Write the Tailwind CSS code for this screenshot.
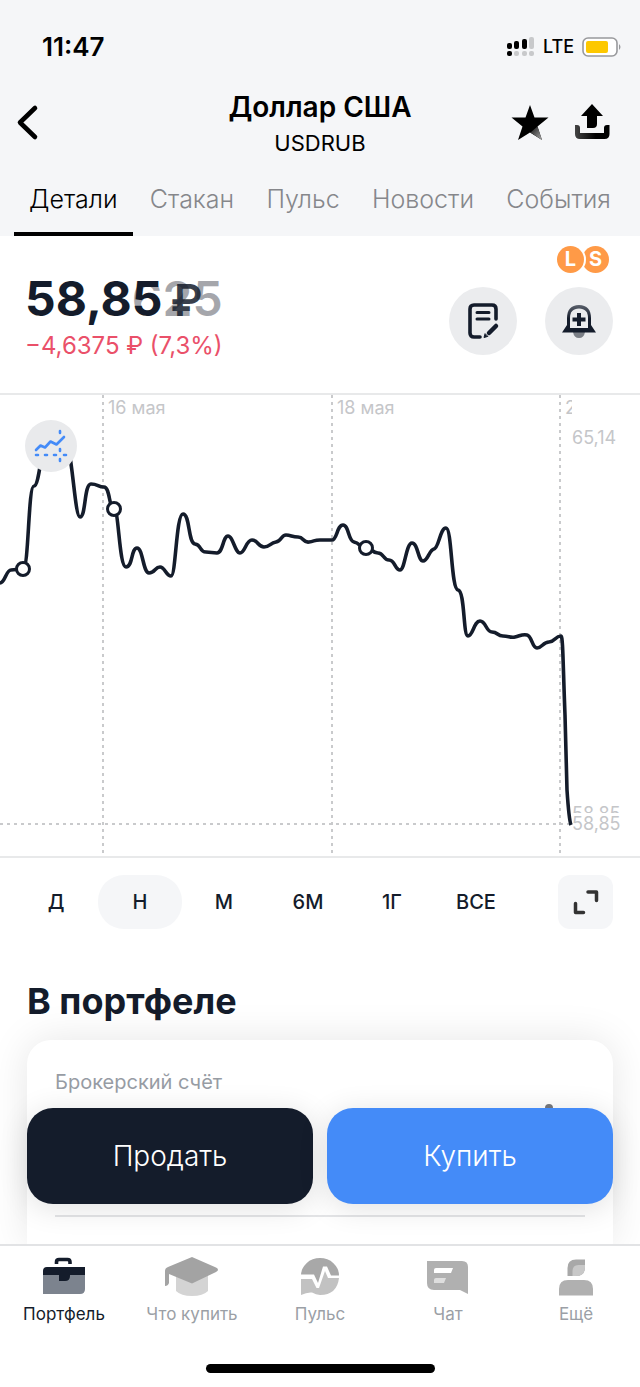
<!DOCTYPE html>
<html lang="ru">

<head>
  <meta charset="UTF-8" />
  <meta name="viewport" content="width=device-width, initial-scale=1.0" />
  <script src="https://cdn.jsdelivr.net/npm/@tailwindcss/browser@4"></script>
  <title>Доллар США</title>
</head>

<body class="min-h-screen flex flex-col bg-white text-[#141c2b] font-['Inter','Liberation_Sans',sans-serif]">
  <header class="bg-[#f5f6f8] text-black">
    <!-- Status bar -->
    <div class="flex items-center justify-between pt-8 pl-[42px] pr-[18px]">
      <span class="text-[26px] leading-[30px] font-semibold">11:47</span>
      <div class="flex items-center gap-2">
        <svg class="w-7 h-5" viewBox="0 0 28 20" aria-hidden="true">
          <g fill="#000">
            <rect x="0" y="6" width="5" height="6" rx="2" />
            <rect x="7" y="4" width="5" height="8" rx="2" />
            <rect x="15" y="2" width="5" height="10" rx="2" />
            <rect x="0" y="14" width="5" height="5" rx="2" />
          </g>
          <g fill="#c8c9cb">
            <rect x="22" y="0" width="5" height="12" rx="2" />
            <rect x="7" y="14" width="5" height="5" rx="2" />
            <rect x="15" y="14" width="5" height="5" rx="2" />
            <rect x="22" y="14" width="5" height="5" rx="2" />
          </g>
        </svg>
        <span class="text-lg font-medium">LTE</span>
        <svg class="w-10 h-5" viewBox="0 0 40 20" aria-hidden="true">
          <rect x="1" y="1" width="34" height="18" rx="5" fill="#fff" stroke="#98999c" stroke-width="1.6" />
          <rect x="4" y="4" width="22" height="12" rx="2" fill="#fdc800" />
          <path d="M37 7q3 3 0 6z" fill="#98999c" />
        </svg>
      </div>
    </div>

    <!-- Title row -->
    <div class="grid grid-cols-[1fr_auto_1fr] items-center mt-[27px] px-3.5">
      <button type="button" aria-label="Назад" class="justify-self-start">
        <svg class="w-7 h-10" viewBox="0 0 28 40" fill="none" stroke="#000" stroke-width="4.6" stroke-linecap="round" stroke-linejoin="round">
          <path d="M21 5 6 19.500 21 34" />
        </svg>
      </button>
      <div class="text-center">
        <h1 class="text-[28px] leading-9 font-semibold">Доллар США</h1>
        <p class="mt-1 text-[22px] leading-7">USDRUB</p>
      </div>
      <div class="justify-self-end flex gap-6 pr-4">
        <button type="button" aria-label="В избранное">
          <svg class="w-10 h-10" viewBox="0 0 40 40">
            <defs>
              <linearGradient id="star-leg" x1="0" y1="0" x2="1" y2="1">
                <stop offset="0.2" stop-color="#333" />
                <stop offset="1" stop-color="#aaa" />
              </linearGradient>
            </defs>
            <path d="M20 2 24.500 14.500H38.500L27.500 23.500 32 37 20 29.500 8 37 12.500 23.500 1.500 14.500H15.500Z" />
            <path d="M27.500 23.500 32 37 20.500 29.500Z" fill="url(#star-leg)" />
          </svg>
        </button>
        <button type="button" aria-label="Поделиться">
          <svg class="w-9 h-10" viewBox="0 0 36 40">
            <defs>
              <linearGradient id="tray">
                <stop offset="0" stop-color="#444" />
                <stop offset="0.6" stop-color="#000" />
              </linearGradient>
            </defs>
            <path d="M18 1 29 13H23V21Q23 25 19 25H13V13H7Z" />
            <path d="M1 22H3Q6 22 6 25V30H30V25Q30 22 33 22H35.500V31Q35.500 36 30.500 36H6Q1 36 1 31Z" fill="url(#tray)" />
          </svg>
        </button>
      </div>
    </div>

    <!-- Tabs -->
    <nav class="flex justify-between mt-[25px] px-3.5 text-[25px] leading-[34px] font-light text-[#86878b]">
      <a href="#details" class="px-[15px] pb-4 border-b-4 border-black text-black">Детали</a>
      <a href="#book" class="px-[15px] pb-4">Стакан</a>
      <a href="#pulse" class="px-[15px] pb-4">Пульс</a>
      <a href="#news" class="px-[15px] pb-4">Новости</a>
      <a href="#events" class="px-[15px] pb-4">События</a>
    </nav>
  </header>

  <main class="flex-1 flex flex-col">
    <!-- Price -->
    <section class="flex justify-between px-[25px] pb-[31px]">
      <div class="pt-[35px]">
        <!-- the old and the new price overlap while the number is changing -->
        <div class="flex text-5xl leading-[56px] font-bold">
          <span>58,8</span>
          <span class="grid">
            <span class="col-start-1 row-start-1 font-semibold text-[#a5a6ab]">625</span>
            <span class="col-start-1 row-start-1">5<span class="ml-2 text-[44px] font-semibold text-[#141c2b]/85">₽</span></span>
          </span>
        </div>
        <p class="mt-0.5 text-2xl leading-8 text-[#ea5069]">−4,6375 ₽ (7,3%)</p>
      </div>
      <div class="flex flex-col items-end pt-2.5 pr-0.5">
        <div class="flex pr-1 text-white text-xl leading-[27px] font-bold text-center">
          <span class="relative z-10 size-[27px] rounded-full bg-[#ff9a47] ring-2 ring-white">L</span>
          <span class="-ml-0.5 size-[27px] rounded-full bg-[#ff9a47]">S</span>
        </div>
        <div class="flex gap-7 mt-3.5">
          <button type="button" aria-label="Заметка" class="flex items-center justify-center size-[68px] rounded-full bg-[#ebecee]">
            <svg class="size-10" viewBox="0 0 40 40" fill="none" stroke="#141c2b" stroke-width="3.600" stroke-linecap="round" stroke-linejoin="round">
              <path d="M17 36H11Q7 36 7 32V8Q7 4 11 4H29Q33 4 33 8V18" />
              <path d="M14 11.500H26M14 18H26" stroke-width="3" />
              <path d="M26 32 33 25" stroke-width="4.500" />
              <path d="M22 33 21 36.500 24.500 35.500Z" stroke-width="1" fill="#141c2b" />
            </svg>
          </button>
          <button type="button" aria-label="Уведомление о цене" class="flex items-center justify-center size-[68px] rounded-full bg-[#ebecee]">
            <svg class="size-10" viewBox="0 0 40 40">
              <defs>
                <linearGradient id="bell" x2="0" y2="1">
                  <stop offset="0" stop-color="#5b616c" />
                  <stop offset="0.5" stop-color="#141c2b" />
                </linearGradient>
              </defs>
              <path d="M14 31H26Q25 37 20 37T14 31Z" fill="#7b7f86" />
              <path d="M3 31.500 8 24V17C8 9 12 4 20 4S32 9 32 17V24L37 31.500Z" fill="url(#bell)" />
              <path d="M11 27V17C11 11 14 7.500 20 7.500S29 11 29 17V27Z" fill="#ebecee" />
              <path d="M20 12V25M13.500 18.500H26.500" stroke="#141c2b" stroke-width="4" />
            </svg>
          </button>
        </div>
      </div>
    </section>

    <!-- Chart -->
    <section class="relative border-y-2 border-[#e8e9ea]">
      <svg class="block w-full" viewBox="0 0 640 461" font-size="18" fill="#c5c6c9">
        <defs>
          <clipPath id="date-clip">
            <rect x="560" y="0" width="12" height="30" />
          </clipPath>
          <clipPath id="quote-clip">
            <rect x="570" y="400" width="70" height="18" />
          </clipPath>
        </defs>
        <path d="M103 0V461M332 0V461M560 0V461M0 429H571" fill="none" stroke="#c9cacc" stroke-width="2" stroke-dasharray="3 4" />
        <text x="108" y="19">16 мая</text>
        <text x="337" y="19">18 мая</text>
        <text x="565" y="19" clip-path="url(#date-clip)">20 мая</text>
        <text x="572" y="49">65,14</text>
        <text x="572" y="425" clip-path="url(#quote-clip)">58,85</text>
        <text x="572" y="435">58,85</text>
        <path d="M0 188C5 188 6 175 11 175S17 174 23 174S28 91 34 91S42 38 50 38L62 38C72 38 74 122 80 122S84 89 91 89S98 92 104 92S109 114 114 114S119 172 126 172S131 153 137 153S143 178 149 178S155 172 160 172S166 181 171 181S176 119 183 119S188 148 195 149S199 157 206 157L217 158C223 158 223 141 228 141S235 158 240 158S246 145 252 145S258 152 264 152S270 148 276 147S281 140 286 140S292 142 298 142S303 148 309 147S314 145 320 145L332 145C337 145 337 130 343 130S348 146 354 147S360 153 366 153S372 158 378 158S383 165 389 165S395 175 400 175S406 148 412 148S418 166 423 166S429 155 434 154S440 133 446 133S451 194 458 195S463 241 468 241S474 226 480 226S486 237 492 237S497 241 503 241S510 243 515 242S522 239 527 240S532 253 537 253S543 247 549 247S555 241 561 241C563 241 563 270 565 320L567 395Q569 425 571 430" fill="none" stroke="#141c2b" stroke-width="3.600" stroke-linejoin="round" />
        <g fill="#fff" stroke="#141c2b" stroke-width="3">
          <circle cx="23" cy="174" r="6.500" />
          <circle cx="114" cy="114" r="6.500" />
          <circle cx="366" cy="153" r="6.500" />
        </g>
      </svg>
      <button type="button" aria-label="Индикаторы" class="absolute top-[25px] left-[25px] flex items-center justify-center size-[52px] rounded-full bg-[#e9eaec]">
        <svg class="size-9" viewBox="0 0 36 36" fill="none" stroke="#448bf8" stroke-width="2.600" stroke-linecap="round" stroke-linejoin="round">
          <path d="M3 22 7.500 17.500 12 19.500 17.500 13.500 23.500 16.500 31 9" />
          <path d="M3 27H5M12 27H14M21 27H23M31 27H33M27 3V5M27 21V23M27 31V33" />
        </svg>
      </button>
    </section>

    <!-- Period switch -->
    <section class="flex items-center pt-[17px] pl-3.5 pr-[27px] text-xl font-medium">
      <div class="flex-1 grid grid-cols-6 mr-10">
        <button type="button" class="h-[54px] rounded-full">Д</button>
        <button type="button" class="h-[54px] rounded-[26px] bg-[#f5f6f8]">Н</button>
        <button type="button" class="h-[54px] rounded-full">М</button>
        <button type="button" class="h-[54px] rounded-full">6М</button>
        <button type="button" class="h-[54px] rounded-full">1Г</button>
        <button type="button" class="h-[54px] rounded-full">ВСЕ</button>
      </div>
      <button type="button" aria-label="На весь экран" class="flex items-center justify-center w-[55px] h-[54px] rounded-xl bg-[#f5f6f8]">
        <svg class="size-7" viewBox="0 0 28 28" fill="none" stroke="#333" stroke-width="3.500" stroke-linecap="round" stroke-linejoin="round">
          <path d="M16 4H24.500V12.500M3.500 15.500V24.500H11.500" />
        </svg>
      </button>
    </section>

    <!-- Portfolio -->
    <section class="relative flex-1 flex flex-col pt-[50px] px-[27px] overflow-hidden">
      <h2 class="text-4xl leading-[44px] font-bold">В портфеле</h2>
      <div class="relative flex-1 mt-[17px] pt-7 px-7 pb-6 rounded-t-3xl bg-white shadow-[0_0_40px_rgba(0,0,0,0.1)]">
        <p class="text-xl leading-7 text-[#979ca4]">Брокерский счёт</p>
        <div class="mt-[119px] border-t-2 border-[#e4e5e7]"></div>
        <!-- top edge of the amount that the buttons cover -->
        <span class="absolute top-16 right-[60px] w-2 h-3 rounded-full bg-[#77797e]"></span>
      </div>
      <div class="absolute inset-x-[27px] bottom-10 grid grid-cols-2 gap-3.5 text-[28px] font-light text-white">
        <button type="button" class="h-24 rounded-[26px] bg-[#141c2b] shadow-[0_4px_30px_rgba(0,0,0,0.12)]">Продать</button>
        <button type="button" class="h-24 rounded-[26px] bg-[#448bf8] shadow-[0_4px_30px_rgba(0,0,0,0.12)]">Купить</button>
      </div>
    </section>
  </main>

  <footer class="border-t-2 border-[#e2e3e5] bg-white">
    <nav class="grid grid-cols-5 pt-2.5 text-[17px] leading-6 text-[#9b9fa6]">
      <a href="#portfolio" class="flex flex-col items-center gap-1.5 text-[#141c2b]">
        <svg class="w-14 h-10" viewBox="0 0 56 40">
          <path d="M20.500 8V6Q20.500 3.500 23 3.500H31.500Q34 3.500 34 6V8" fill="none" stroke="#141c2b" stroke-width="3.600" />
          <path d="M7 19H49V33Q49 38 44 38H7Z" fill="#7c838e" />
          <path d="M7 19V15Q7 11 11 11H49V19H34V20Q34 25 29 25H23V19Z" fill="#141c2b" />
        </svg>
        Портфель
      </a>
      <a href="#buy" class="flex flex-col items-center gap-1.5">
        <svg class="w-14 h-10" viewBox="0 0 56 40">
          <path d="M12 17H44V35Q39 40 28 40T12 35Z" fill="#d4d4d4" />
          <path d="M28 1 52 11.500Q56 13.500 52 16L28 27.500 5 18V27Q4 30 1 30V15Q1 12 4 11Z" fill="#a3a3a3" />
        </svg>
        Что купить
      </a>
      <a href="#feed" class="flex flex-col items-center gap-1.5">
        <svg class="w-14 h-10" viewBox="0 0 56 40">
          <path d="M9 19.500A19 17.500 0 0 1 47 19.500H39L35 10.500H31L26 27 22 18.500H9Z" fill="#a8a8a8" />
          <path d="M9 23H20L24.500 32H27L33 15 36 22H47Q45 39 28 39Q24 38.500 20 36.500Q15 36 9 39Z" fill="#c2c2c2" />
        </svg>
        Пульс
      </a>
      <a href="#chat" class="flex flex-col items-center gap-1.5">
        <svg class="w-14 h-10" viewBox="0 0 56 40">
          <path d="M7 5H42Q48 5 48 11V38L40 34H14Q7 34 7 27Z" fill="#b0b0b0" />
          <path d="M16 12H33L31 17H14V14Q14 12 16 12Z" fill="#fff" />
          <path d="M16 22H26L24 27H14V24Q14 22 16 22Z" fill="#dedede" />
        </svg>
        Чат
      </a>
      <a href="#more" class="flex flex-col items-center gap-1.5">
        <svg class="w-14 h-10" viewBox="0 0 56 40">
          <path d="M19.500 20V12Q19.500 3.500 28 3.500H37V11Q37 20 28 20Z" fill="#a8a8a8" />
          <path d="M24.500 20V15Q24.500 9 30.500 9H37V11Q37 20 28 20Z" fill="#c8c8c8" />
          <path d="M11 39.500V33Q11 24 20 24H36Q45 24 45 33V39.500Z" fill="#b0b0b0" />
        </svg>
        Ещё
      </a>
    </nav>
    <div class="w-[229px] h-[9px] mx-auto mt-[38px] mb-3.5 rounded-full bg-black"></div>
  </footer>
</body>

</html>
